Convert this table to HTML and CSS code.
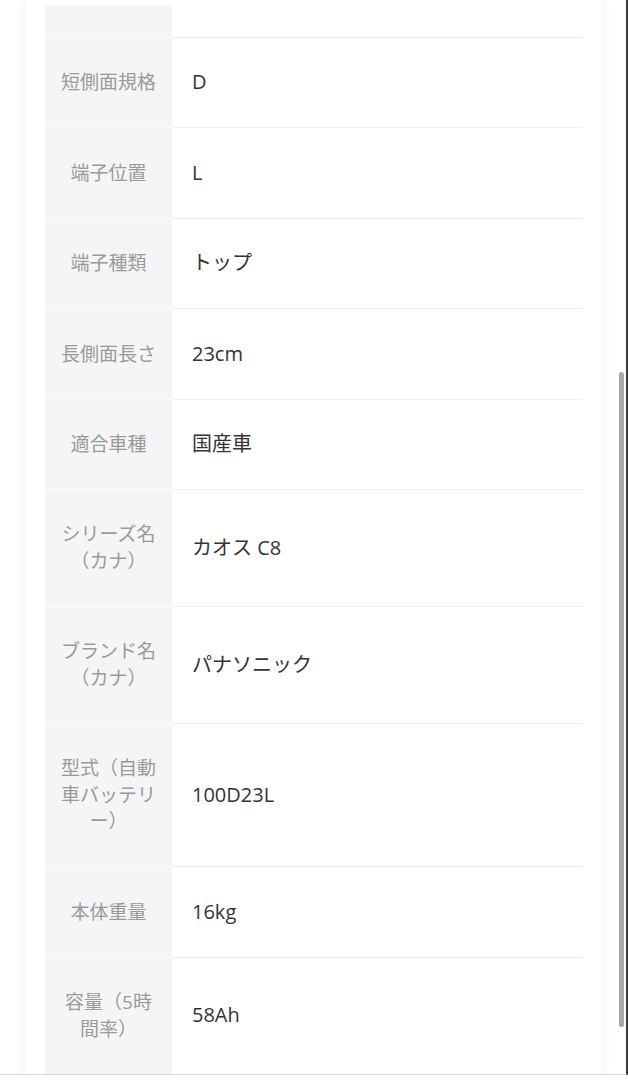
FILE: index.html
```html
<!DOCTYPE html>
<html lang="ja">
<head>
<meta charset="utf-8">
<title>スペック</title>
<link rel="stylesheet" href="styles.css">
</head>
<body>
<div class="screen">
  <main class="page">
    <section class="card">
      <div class="specs">
        <div class="label partial"></div><div class="value partial"></div>
        <div class="label">短側面規格</div><div class="value">D</div>
        <div class="label">端子位置</div><div class="value">L</div>
        <div class="label">端子種類</div><div class="value">トップ</div>
        <div class="label">長側面長さ</div><div class="value">23cm</div>
        <div class="label">適合車種</div><div class="value">国産車</div>
        <div class="label">シリーズ名<br>（カナ）</div><div class="value">カオス C8</div>
        <div class="label">ブランド名<br>（カナ）</div><div class="value">パナソニック</div>
        <div class="label">型式（自動<br>車バッテリ<br>ー）</div><div class="value">100D23L</div>
        <div class="label">本体重量</div><div class="value">16kg</div>
        <div class="label">容量（5時<br>間率）</div><div class="value">58Ah</div>
      </div>
    </section>
  </main>
  <div class="scrollbar"><div class="thumb"></div></div>
</div>
</body>
</html>
```

FILE: styles.css
```css
html, body {
  margin: 0;
  padding: 0;
  background: #ffffff;
}
body {
  width: 628px;
  height: 1080px;
  overflow: hidden;
  font-family: "Open Sans", "Noto Sans CJK JP", sans-serif;
}
.screen {
  display: flex;
  height: 1075px;
  border-bottom: 1px solid #d6d6d6;
  border-right: 2px solid #3a3a3a;
  overflow: hidden;
  box-sizing: border-box;
  width: 628px;
}
.page {
  flex: 1;
  padding-left: 25px;
  padding-right: 12px;
  min-width: 0;
}
.card {
  background: #ffffff;
  box-shadow: 0 0 10px rgba(0, 0, 0, 0.07);
  padding: 5px 19px 0 20px;
  height: 1075px;
  box-sizing: border-box;
}
.specs {
  display: grid;
  grid-template-columns: 127px 1fr;
}
.label {
  background: #f5f5f5;
  color: #9a9a9a;
  font-size: 19px;
  line-height: 26.6px;
  text-align: center;
  padding: 31.4px 10px;
  border-bottom: 1px solid #fbfbfb;
  display: flex;
  align-items: center;
  justify-content: center;
}
.value {
  color: #333333;
  font-size: 20px;
  line-height: 26.6px;
  padding: 0 20px;
  border-bottom: 1px solid #efefef;
  display: flex;
  align-items: center;
}
.partial {
  height: 32px;
  padding: 0;
}
.scrollbar {
  width: 12px;
  padding-top: 372px;
  display: flex;
  justify-content: flex-start;
}
.thumb {
  width: 5px;
  height: 655px;
  margin-left: 5px;
  background: #a8a8a8;
  border-radius: 3px;
}
```
